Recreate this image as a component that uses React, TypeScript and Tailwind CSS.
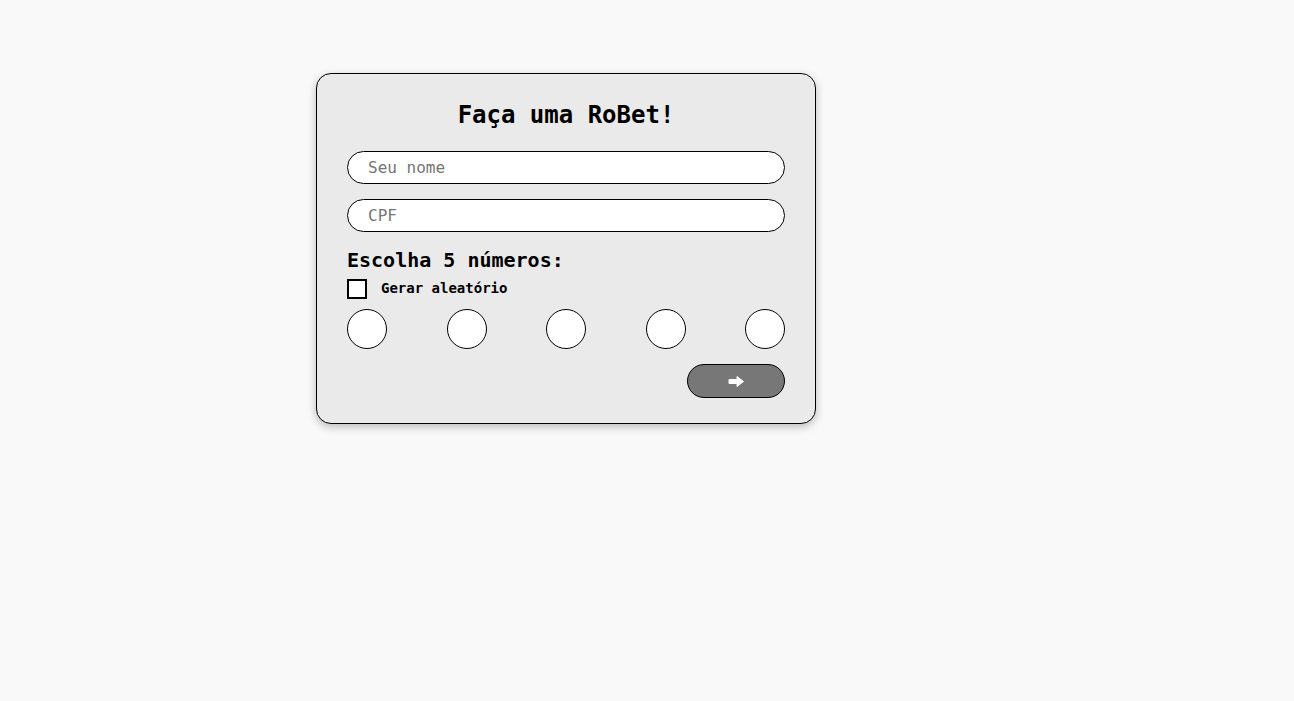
export default function App() {
  const slots = [0, 1, 2, 3, 4];
  return (
    <div className="min-h-screen w-full bg-[#f9f9f9] pt-[73px] pl-[316px] font-['DejaVu_Sans_Mono',monospace]">
      <form className="w-[500px] bg-[#eaeaea] border border-black rounded-[15px] shadow-[0_3px_8px_rgba(0,0,0,0.25)] px-[30px] pt-[25px] pb-[25px] flex flex-col">
        <h1 className="text-[24px] leading-[32px] font-bold text-center text-black">Faça uma RoBet!</h1>

        <input
          type="text"
          placeholder="Seu nome"
          className="mt-[20px] h-[33px] w-full rounded-full border border-black bg-white pl-[20px] text-[16px] placeholder:text-[#757575] outline-none"
        />
        <input
          type="text"
          placeholder="CPF"
          className="mt-[15px] h-[33px] w-full rounded-full border border-black bg-white pl-[20px] text-[16px] placeholder:text-[#757575] outline-none"
        />

        <h2 className="mt-[14px] text-[20px] leading-[28px] font-bold text-black">Escolha 5 números:</h2>

        <label className="mt-[4px] flex items-center gap-[14px]">
          <span className="w-[20px] h-[20px] border-2 border-black bg-white"></span>
          <span className="text-[14px] font-bold text-black">Gerar aleatório</span>
        </label>

        <div className="mt-[10px] flex justify-between">
          {slots.map((i) => (
            <input
              key={i}
              type="text"
              className="w-[40px] h-[40px] rounded-full border border-black bg-white text-center outline-none"
            />
          ))}
        </div>

        <div className="mt-[15px] flex justify-end">
          <button
            type="button"
            className="w-[98px] h-[34px] rounded-full border border-black bg-[#777777] flex items-center justify-center"
          >
            {/* seta */}
            <svg width="16" height="11" viewBox="0 0 16 11">
              <path d="M1 3.5 H9 V0.5 L15.5 5.5 L9 10.5 V7.5 H1 Z" fill="white" strokeLinejoin="round" stroke="white" strokeWidth="1" />
            </svg>
          </button>
        </div>
      </form>
    </div>
  );
}
